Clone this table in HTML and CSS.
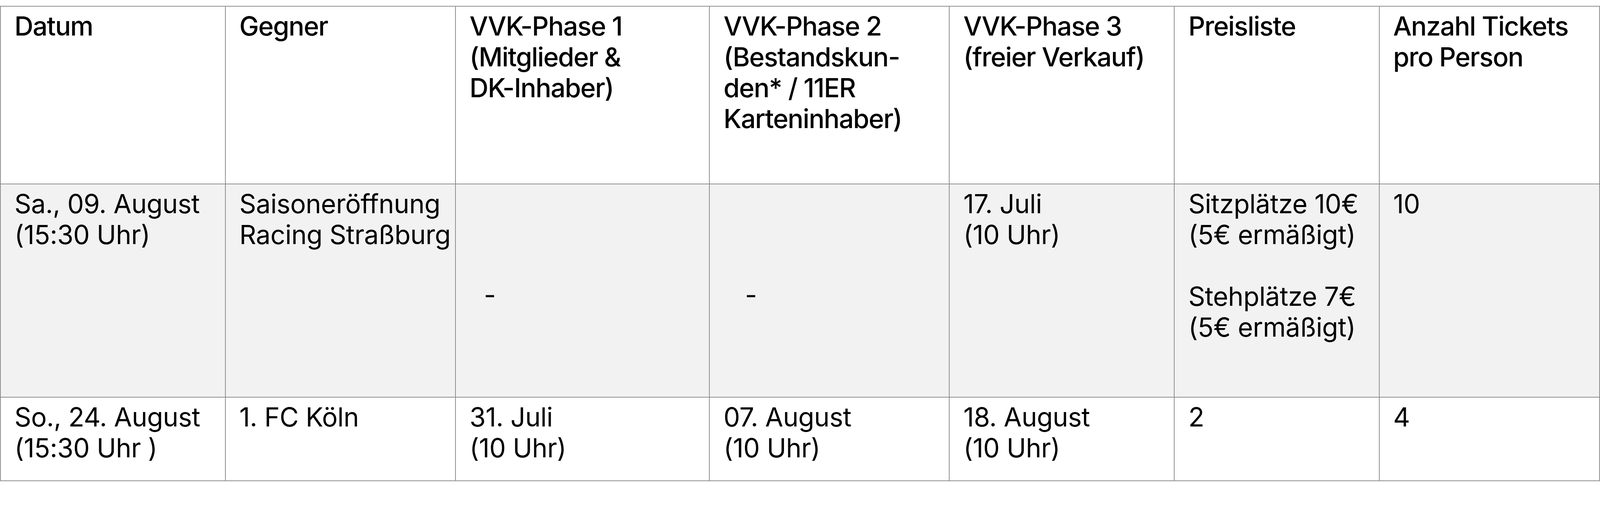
FILE: index.html
```html
<!DOCTYPE html>
<html lang="de">
<head>
<meta charset="utf-8">
<title>Vorverkauf</title>
<link rel="stylesheet" href="styles.css">
</head>
<body>
<table class="tickets">
  <colgroup>
    <col class="c-datum">
    <col class="c-gegner">
    <col class="c-p1">
    <col class="c-p2">
    <col class="c-p3">
    <col class="c-preis">
    <col class="c-anzahl">
  </colgroup>
  <thead>
    <tr class="row-head">
      <th>Datum</th>
      <th>Gegner</th>
      <th>VVK-Phase 1<br>(Mitglieder &amp;<br>DK-Inhaber)</th>
      <th>VVK-Phase 2<br>(Bestandskun-<br>den* / 11ER<br>Karteninhaber)</th>
      <th>VVK-Phase 3<br>(freier Verkauf)</th>
      <th>Preisliste</th>
      <th>Anzahl Tickets<br>pro Person</th>
    </tr>
  </thead>
  <tbody>
    <tr class="row-alt row-tall">
      <td>Sa., 09. August<br>(15:30 Uhr)</td>
      <td>Saisoneröffnung<br>Racing Straßburg</td>
      <td class="empty">&nbsp;&nbsp;-</td>
      <td class="empty">&nbsp;&nbsp;&nbsp;-</td>
      <td>17. Juli<br>(10 Uhr)</td>
      <td>Sitzplätze 10€<br>(5€ ermäßigt)<br><br>Stehplätze 7€<br>(5€ ermäßigt)</td>
      <td>10</td>
    </tr>
    <tr class="row-short">
      <td>So., 24. August<br>(15:30 Uhr )</td>
      <td>1. FC Köln</td>
      <td>31. Juli<br>(10 Uhr)</td>
      <td>07. August<br>(10 Uhr)</td>
      <td>18. August<br>(10 Uhr)</td>
      <td>2</td>
      <td>4</td>
    </tr>
  </tbody>
</table>
</body>
</html>
```

FILE: styles.css
```css
html, body {
  margin: 0;
  padding: 0;
  background: #ffffff;
}

body {
  font-family: "Inter", "Liberation Sans", sans-serif;
  color: #000000;
}

.tickets {
  margin-top: 15px;
  width: 100%;
  table-layout: fixed;
  border-collapse: collapse;
  font-size: 67px;
  line-height: 79px;
}

.c-datum  { width: 14.066%; }
.c-gegner { width: 14.392%; }
.c-p1     { width: 15.882%; }
.c-p2     { width: 14.998%; }
.c-p3     { width: 14.066%; }
.c-preis  { width: 12.809%; }
.c-anzahl { width: 13.787%; }

.tickets th,
.tickets td {
  border: 2px solid #8f8f8f;
  padding: 10px 12px 40px 35px;
  vertical-align: top;
  text-align: left;
  white-space: nowrap;
}

.tickets th {
  font-weight: 500;
  letter-spacing: -0.025em;
}

.tickets td {
  font-weight: 400;
  letter-spacing: -0.008em;
}

.row-head th {
  padding-bottom: 127px;
}

.row-tall td {
  padding-bottom: 139px;
}

.row-short td {
  padding-bottom: 44px;
}

.row-alt td {
  background: #f2f2f2;
}

.tickets .row-tall td.empty {
  vertical-align: middle;
  padding-top: 40px;
  padding-bottom: 20px;
}
```
